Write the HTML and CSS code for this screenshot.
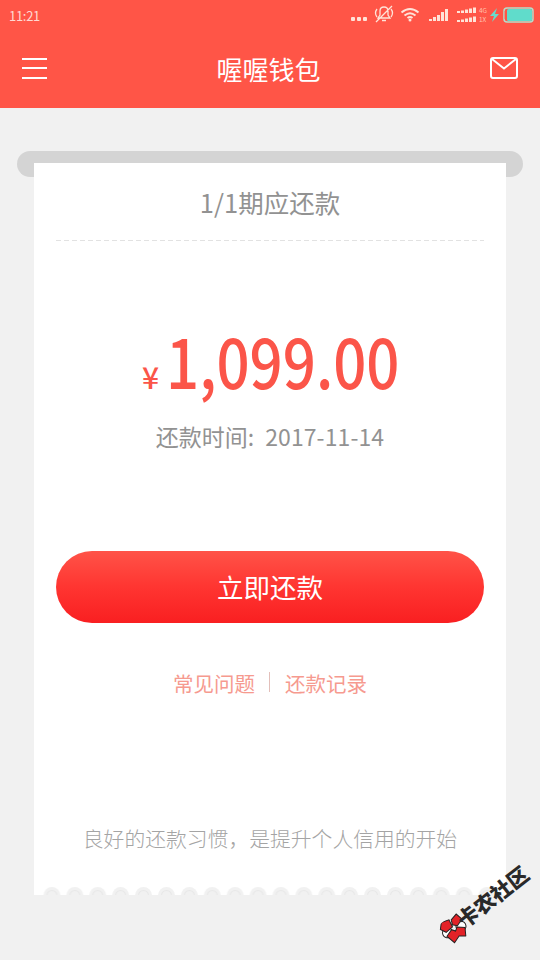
FILE: index.html
```
<!DOCTYPE html>
<html lang="zh-CN">
<head>
<meta charset="utf-8">
<title>喔喔钱包</title>
<link rel="stylesheet" href="styles.css">
</head>
<body>
<header class="header">
  <div class="status">
    <span class="clock">11:21</span>
    <svg class="status-icons" width="190" height="28" viewBox="0 0 190 28">
      <g fill="#ffe3d8">
        <rect x="1" y="17" width="4" height="4" rx="1"/><rect x="7" y="17" width="4" height="4" rx="1"/><rect x="13" y="17" width="4" height="4" rx="1"/>
      </g>
      <g fill="none" stroke="#ffe3d8" stroke-width="1.3">
        <path d="M28 18h12l-2-3v-4q0-4-4-4t-4 4v4zM32 20.500h4M26 22L42 6M27 9q-3 4 0 8M41 9q3 4 0 8"/>
      </g>
      <g fill="none" stroke="#ffe3d8" stroke-width="2">
        <path d="M51.500 12.500q8.500-7 17 0M54.500 15.500q5.500-4.500 11 0M57.500 18q2.500-2 5 0"/>
      </g>
      <circle cx="60" cy="20" r="1.500" fill="#ffe3d8"/>
      <g fill="#ffe3d8">
        <path d="M79 19h3v2h-3zM83 17h3v4h-3zM87 15h3v6h-3zM91 12h3v9h-3zM95 9h3v12h-3z"/>
        <path d="M107 11h3v2h-3zM111 10.500h3v2.500h-3zM115 9.500h3V13h-3zM119 8.500h3V13h-3zM123 7.500h3V13h-3z"/>
        <path d="M107 20h3v2h-3zM111 19.500h3v2.500h-3zM115 18.500h3V22h-3zM119 17.500h3V22h-3zM123 16.500h3V22h-3z"/>
      </g>
      <g class="net"><text x="129" y="13">4G</text><text x="129" y="22">1X</text></g>
      <path d="M147 8l-7 8h4l-2 6 7-8h-4z" fill="#69dbcb"/>
      <rect x="154" y="8" width="29" height="14" rx="3" fill="none" stroke="#b8ddca" stroke-width="1.500"/>
      <rect x="157" y="9" width="25" height="12" rx="1.500" fill="#60dccb"/>
      <path d="M155.500 11v8" stroke="#ff5547" stroke-width="1.500"/>
    </svg>
  </div>
  <nav class="nav">
    <svg width="26" height="24" viewBox="0 0 26 24" stroke="#fff" stroke-width="2"><path d="M0 3h25M0 12h25M0 22h25"/></svg>
    <h1 class="title">喔喔钱包</h1>
    <svg width="28" height="24" viewBox="0 0 28 24" fill="none" stroke="#fff" stroke-width="2"><rect x="1" y="2" width="26" height="20" rx="2"/><path d="M2 3l12 9.500L26 3"/></svg>
  </nav>
</header>
<main class="page">
  <div class="slot">
    <section class="card">
      <h2 class="period"><span>1/1期应还款</span></h2>
      <svg class="dash" width="428" height="2"><path d="M0 1.500h428" stroke="#e2e2e2" stroke-dasharray="5 3"/></svg>
      <div class="amount"><span class="yen">¥</span><span class="figure">1,099.00</span></div>
      <p class="due"><span>还款时间:</span><span class="date">2017-11-14</span></p>
      <button class="pay">立即还款</button>
      <div class="links"><a>常见问题</a><i class="divider"></i><a>还款记录</a></div>
      <p class="note">良好的还款习惯，是提升个人信用的开始</p>
      <svg class="scallops" width="472" height="8" viewBox="0 0 472 8">
        <defs><pattern id="scallop" x="6.500" width="22.900" height="20" patternUnits="userSpaceOnUse">
          <circle cx="11.450" cy="8.500" r="8.500" fill="#f1f1f1"/><circle cx="11.450" cy="8.500" r="5" fill="none" stroke="#e8e8e8"/>
        </pattern></defs>
        <rect x="6.500" width="458" height="8" fill="url(#scallop)"/>
      </svg>
    </section>
  </div>
</main>
<div class="watermark">
  <svg width="28" height="26" viewBox="0 0 28 26" stroke="#262222" stroke-width="1">
    <g transform="rotate(12 14 13)">
      <circle cx="6" cy="13" r="5" fill="#fff"/><circle cx="21" cy="13" r="5" fill="#fff"/>
      <path fill="#e32227" d="M5 1l8 1v8l-8 2-4-5zM15 3l7-3 3 7-7 4-4-3zM4 16l7-4 3 3 3-3 7 4-3 8-6-3-7 4z"/>
    </g>
  </svg>
  <span class="watermark-text">卡农社区</span>
</div>
</body>
</html>
```
FILE: styles.css
```
* { box-sizing: border-box; }
body {
  margin: 0;
  position: relative;
  height: 960px;
  overflow: hidden;
  background: #f1f1f1;
  font-family: "Noto Sans CJK SC", sans-serif;
  font-weight: 400;
}
h1, h2, p { margin: 0; font-weight: 400; }
.header { height: 108px; background: #ff5547; color: #fff; }
.status { display: flex; justify-content: space-between; height: 30px; padding-left: 9px; }
.clock { font-size: 13px; line-height: 31px; color: #ffd9d2; letter-spacing: -0.3px; }
.net { font-size: 6.500px; fill: #ffc2ae; }
.nav { display: flex; align-items: center; justify-content: space-between; height: 78px; padding: 0 22px; }
.nav svg { margin-bottom: 2px; }
.title { font-size: 26px; line-height: 36px; margin-right: 1px; }
.page { padding: 43px 17px 0; }
.slot { height: 26px; padding: 12px 17px 0; border-radius: 13px; background: #d4d4d4; }
.card {
  display: flex;
  flex-direction: column;
  align-items: center;
  height: 732px;
  background: #fff;
}
.period { display: flex; justify-content: center; height: 76px; font-size: 25.500px; line-height: 78px; color: #929292; }
.dash { display: block; flex: none; }
.amount {
  display: flex;
  align-items: baseline;
  justify-content: center;
  height: 100px;
  margin-top: 69px;
  color: #fb5549;
  line-height: 100px;
}
.yen { width: 18px; margin-right: 6px; font-size: 30px; font-weight: 500; }
.figure { width: 232px; font-size: 68px; font-weight: 500; transform: scaleX(.855); transform-origin: left; }
.due { display: flex; height: 36px; margin-top: 8px; font-size: 23px; line-height: 36px; color: #929292; }
.date { margin-left: 11px; letter-spacing: 0.1px; }
.pay {
  width: 428px;
  height: 72px;
  flex: none;
  margin-top: 97px;
  padding: 0;
  border: 0;
  border-radius: 36px;
  background: linear-gradient(#ff5348, #ff3531 50%, #f91f21);
  color: #fff;
  font: 400 26.500px/72px "Noto Sans CJK SC", sans-serif;
}
.links { display: flex; align-items: center; height: 30px; margin-top: 45px; font-size: 20.500px; line-height: 30px; color: #f69a8f; }
.divider { width: 1px; height: 20px; margin: 0 15px 2px 14px; background: #e3bfba; }
.note { height: 30px; margin-top: 125px; font-size: 20.800px; line-height: 30px; font-weight: 300; color: #a4a4a4; white-space: nowrap; }
.scallops { display: block; flex: none; margin-top: auto; }
.watermark {
  position: absolute;
  left: 432px;
  top: 889px;
  display: flex;
  align-items: center;
  width: 110px;
  height: 30px;
  transform: rotate(-38deg);
}
.watermark svg { flex: none; }
.watermark-text { margin: 0 0 6px -6px; font-size: 21px; font-weight: 900; line-height: 26px; color: #292929; white-space: nowrap; }
```
